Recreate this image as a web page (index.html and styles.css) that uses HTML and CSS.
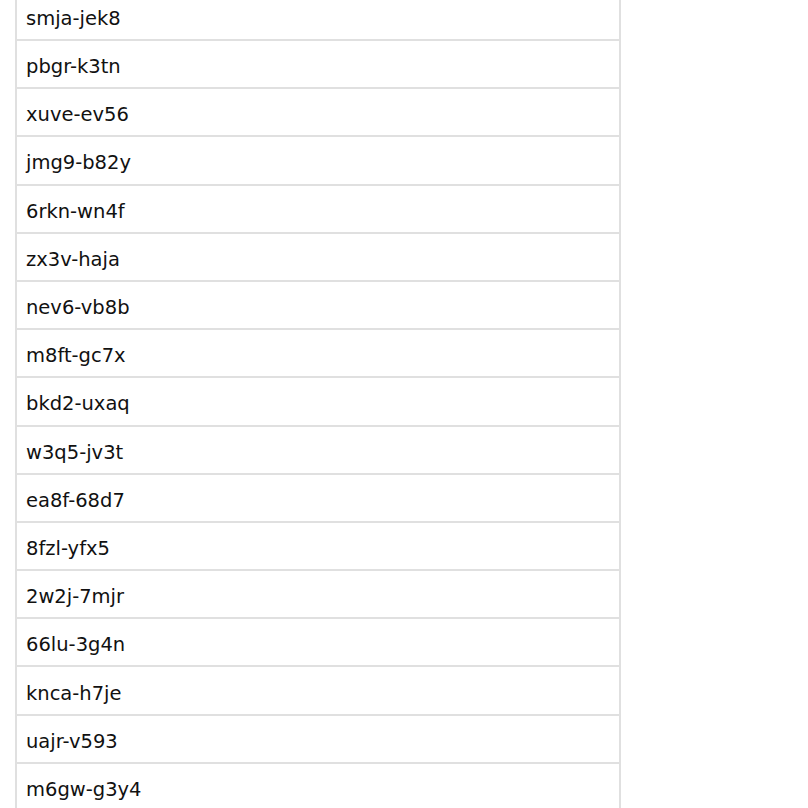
FILE: index.html
```html
<!DOCTYPE html>
<html>
<head>
<meta charset="utf-8">
<link rel="stylesheet" href="styles.css">
</head>
<body>
<ul class="list">
<li class="row">smja-jek8</li>
<li class="row">pbgr-k3tn</li>
<li class="row">xuve-ev56</li>
<li class="row">jmg9-b82y</li>
<li class="row">6rkn-wn4f</li>
<li class="row">zx3v-haja</li>
<li class="row">nev6-vb8b</li>
<li class="row">m8ft-gc7x</li>
<li class="row">bkd2-uxaq</li>
<li class="row">w3q5-jv3t</li>
<li class="row">ea8f-68d7</li>
<li class="row">8fzl-yfx5</li>
<li class="row">2w2j-7mjr</li>
<li class="row">66lu-3g4n</li>
<li class="row">knca-h7je</li>
<li class="row">uajr-v593</li>
<li class="row">m6gw-g3y4</li>
</ul>
</body>
</html>
```
FILE: styles.css
```css
html, body {
  margin: 0;
  padding: 0;
  background: #fff;
  overflow: hidden;
}
.list {
  list-style: none;
  margin: -7.2px 0 0 15px;
  padding: 0;
  width: 602px;
  border-left: 2px solid #e0e0e0;
  border-right: 2px solid #e0e0e0;
}
.row {
  box-sizing: border-box;
  height: 48.2px;
  display: flex;
  align-items: center;
  padding: 5px 0 0 9px;
  border-bottom: 2px solid #e0e0e0;
  font-family: "DejaVu Sans", Verdana, sans-serif;
  font-size: 19.5px;
  color: #111;
}
```
